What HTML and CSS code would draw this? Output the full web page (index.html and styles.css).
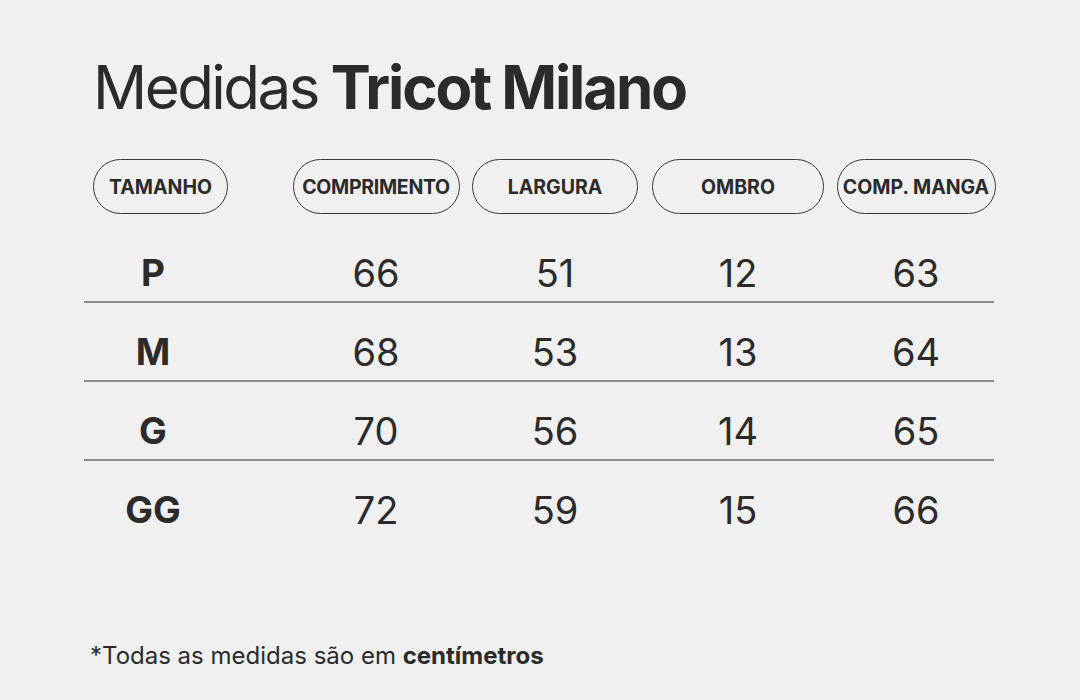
FILE: index.html
```html
<!DOCTYPE html>
<html lang="pt-BR">
<head>
<meta charset="utf-8">
<title>Medidas Tricot Milano</title>
<link rel="stylesheet" href="styles.css">
</head>
<body>
<main class="page">
  <h1 class="title"><span class="light">Medidas</span> <strong>Tricot Milano</strong></h1>
  <div class="table">
    <div class="head">
      <div class="pill pill-size">TAMANHO</div>
      <div class="pill pill-comp">COMPRIMENTO</div>
      <div class="pill pill-larg">LARGURA</div>
      <div class="pill pill-ombro">OMBRO</div>
      <div class="pill pill-manga">COMP. MANGA</div>
    </div>
    <div class="row"><div class="size">P</div><div class="num">66</div><div class="num">51</div><div class="num">12</div><div class="num">63</div></div>
    <div class="row"><div class="size">M</div><div class="num">68</div><div class="num">53</div><div class="num">13</div><div class="num">64</div></div>
    <div class="row"><div class="size">G</div><div class="num">70</div><div class="num">56</div><div class="num">14</div><div class="num">65</div></div>
    <div class="row last"><div class="size">GG</div><div class="num">72</div><div class="num">59</div><div class="num">15</div><div class="num">66</div></div>
  </div>
  <p class="note">*Todas as medidas são em <strong>centímetros</strong></p>
</main>
</body>
</html>
```

FILE: styles.css
```css
html, body {
  margin: 0;
  padding: 0;
  background: #f0f0f0;
}
body {
  width: 1080px;
  height: 700px;
  overflow: hidden;
  font-family: Inter, "Liberation Sans", sans-serif;
  color: #2b2b2b;
}
.page {
  padding: 57px 0 0 84px;
}
.title {
  margin: 0 0 0 9px;
  font-size: 60px;
  line-height: 1;
  font-weight: 400;
  word-spacing: -4px;
}
.title .light {
  letter-spacing: -0.042em;
}
.title strong {
  font-weight: 700;
  letter-spacing: -0.035em;
  word-spacing: -1px;
}
.table {
  width: 910px;
  margin-top: 42px;
}
.head, .row {
  display: grid;
  grid-template-columns: 204px 176px 182px 184px 172px;
  align-items: center;
}
.pill {
  box-sizing: border-box;
  height: 55px;
  border: 1px solid #3a3a3a;
  border-radius: 28px;
  display: flex;
  align-items: center;
  justify-content: center;
  font-size: 19.5px;
  font-weight: 700;
  white-space: nowrap;
  justify-self: center;
}
.pill-size { justify-self: start; margin-left: 9px; width: 135px; }
.pill-comp { width: 167px; letter-spacing: -0.015em; }
.pill-larg { width: 166px; }
.pill-ombro { width: 172px; }
.pill-manga { width: 159px; }
.row {
  padding: 30px 0 9px;
  border-bottom: 2px solid #8c8c8c;
}
.head + .row { margin-top: 10px; }
.row.last { border-bottom: none; }
.size {
  width: 138px;
  text-align: center;
  font-size: 37px;
  line-height: 38px;
  height: 38px;
  font-weight: 700;
}
.num {
  text-align: center;
  font-size: 38px;
  line-height: 1;
  font-weight: 400;
}
.note {
  margin: 106px 0 0 6px;
  font-size: 24px;
  line-height: 1;
}
.note strong { font-weight: 700; }
```
